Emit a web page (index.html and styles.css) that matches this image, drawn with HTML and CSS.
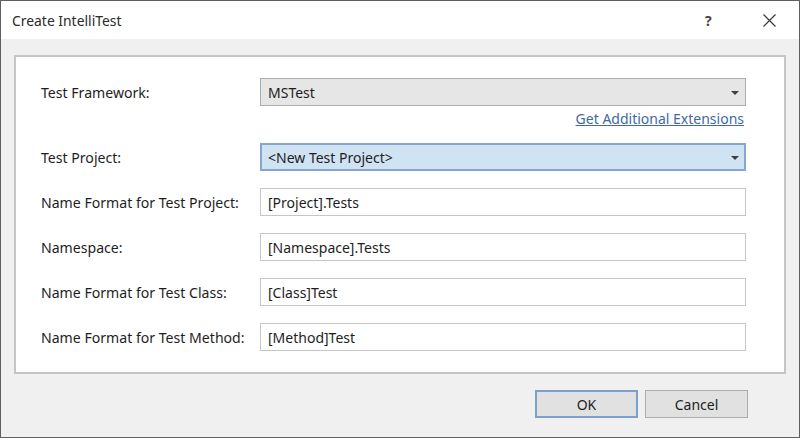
FILE: index.html
```html
<!DOCTYPE html>
<html>
<head>
<meta charset="utf-8">
<link rel="stylesheet" href="styles.css">
</head>
<body>
<div class="window">
  <div class="titlebar">
    <span class="title">Create IntelliTest</span>
    <span class="help">?</span>
    <span class="close"><svg width="13" height="13" viewBox="0 0 13 13"><path d="M0.5 0.5 L12.5 12.5 M12.5 0.5 L0.5 12.5" stroke="#3a3a3a" stroke-width="1.2" fill="none"/></svg></span>
  </div>
  <div class="body">
    <div class="panel">
      <div class="row">
        <div class="label">Test Framework:</div>
        <div class="combo">MSTest<span class="arrow"></span></div>
      </div>
      <div class="linkrow"><span class="link">Get Additional Extensions</span></div>
      <div class="row">
        <div class="label">Test Project:</div>
        <div class="combo focus">&lt;New Test Project&gt;<span class="arrow"></span></div>
      </div>
      <div class="row gap">
        <div class="label">Name Format for Test Project:</div>
        <div class="field">[Project].Tests</div>
      </div>
      <div class="row gap">
        <div class="label">Namespace:</div>
        <div class="field">[Namespace].Tests</div>
      </div>
      <div class="row gap">
        <div class="label">Name Format for Test Class:</div>
        <div class="field">[Class]Test</div>
      </div>
      <div class="row gap">
        <div class="label">Name Format for Test Method:</div>
        <div class="field">[Method]Test</div>
      </div>
    </div>
    <div class="footer">
      <div class="btn default">OK</div>
      <div class="btn">Cancel</div>
    </div>
  </div>
</div>
</body>
</html>
```
FILE: styles.css
```css
* { box-sizing: border-box; }
html, body { margin: 0; padding: 0; }
body {
  font-family: "Noto Sans", "Open Sans", sans-serif;
  font-size: 14px;
  color: #1e1e1e;
  background: #f0f0f0;
}
.window {
  width: 800px;
  height: 438px;
  border: 1px solid #5f5f5f;
  display: flex;
  flex-direction: column;
  background: #f0f0f0;
}
.titlebar {
  height: 38px;
  background: #fff;
  display: flex;
  align-items: center;
  padding-left: 11px;
  flex-shrink: 0;
}
.title {
  font-size: 13.9px;
  color: #2b2b2b;
  flex: 1;
}
.help {
  font-size: 14px;
  font-weight: bold;
  color: #444;
  width: 14px;
  margin-right: 44px;
}
.close {
  width: 13px;
  height: 13px;
  margin-right: 23px;
  display: flex;
}
.body {
  flex: 1;
  padding: 16px 13px 0 13px;
  display: flex;
  flex-direction: column;
}
.panel {
  background: #fff;
  border: 2px solid #c5c5c5;
  height: 319px;
  padding: 21px 38px 0 25px;
  display: flex;
  flex-direction: column;
}
.row {
  display: flex;
  align-items: center;
  height: 28px;
}
.row.gap { margin-top: 17px; }
.label {
  width: 219px;
  flex-shrink: 0;
  font-size: 14.1px;
  color: #1e1e1e;
}
.combo, .field {
  flex: 1;
  height: 28px;
  display: flex;
  align-items: center;
  padding-left: 7px;
  font-size: 14px;
  position: relative;
}
.combo {
  background: #e6e6e6;
  border: 1px solid #adadad;
}
.combo.focus {
  background: #cfe3f3;
  border: 2px solid #86a6cf;
  padding-left: 6px;
}
.field {
  background: #fff;
  border: 1px solid #c6c6c6;
}
.arrow {
  position: absolute;
  right: 6px;
  top: 12px;
  width: 0;
  height: 0;
  border-left: 4px solid transparent;
  border-right: 4px solid transparent;
  border-top: 4px solid #3f3f3f;
}
.combo.focus .arrow { right: 5px; top: 11px; }
.linkrow {
  height: 37px;
  display: flex;
  justify-content: flex-end;
  align-items: flex-start;
  padding-top: 3px;
}
.link {
  color: #3f6aa6;
  text-decoration: underline;
  font-size: 14px;
  margin-right: 2px;
}
.footer {
  display: flex;
  justify-content: flex-end;
  gap: 7px;
  padding-top: 16px;
  padding-right: 38px;
}
.btn {
  width: 103px;
  height: 28px;
  background: #e1e1e1;
  border: 1px solid #adadad;
  display: flex;
  align-items: center;
  justify-content: center;
  font-size: 14px;
  color: #1e1e1e;
}
.btn.default {
  border: 2px solid #7c9fd0;
}
```
